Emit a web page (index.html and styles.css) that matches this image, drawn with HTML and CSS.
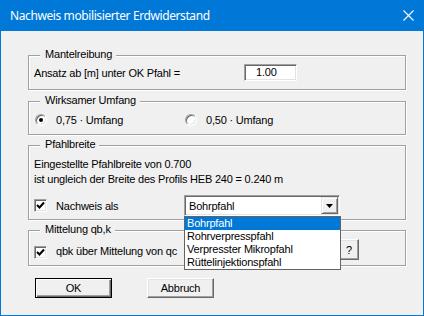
FILE: index.html
```html
<!DOCTYPE html>
<html lang="de">
<head>
    <meta charset="UTF-8">
    <title>Nachweis mobilisierter Erdwiderstand</title>
    <link rel="stylesheet" href="styles.css">
</head>
<body>
    <div class="window">
        <div class="titlebar">
            <span class="title">Nachweis mobilisierter Erdwiderstand</span>
            <svg class="close" width="11" height="11" viewBox="0 0 11 11">
                <path d="M0.5 0.5 L10.5 10.5 M10.5 0.5 L0.5 10.5" stroke="#fff" stroke-width="1.1" fill="none"/>
            </svg>
        </div>
        <div class="client">
            <div class="group g-mantel">
                <div class="legend">Mantelreibung</div>
                <div class="row r-mantel">
                    <span class="label-wide">Ansatz ab [m] unter OK Pfahl =</span>
                    <span class="edit">1.00</span>
                </div>
            </div>

            <div class="group g-umfang">
                <div class="legend">Wirksamer Umfang</div>
                <div class="row r-umfang">
                    <span class="radio checked"></span>
                    <span class="radio-label">0,75 · Umfang</span>
                    <span class="radio"></span>
                    <span class="radio-label">0,50 · Umfang</span>
                </div>
            </div>

            <div class="group g-breite">
                <div class="legend">Pfahlbreite</div>
                <div class="info">
                    <div>Eingestellte Pfahlbreite von 0.700</div>
                    <div>ist ungleich der Breite des Profils HEB 240 = 0.240 m</div>
                </div>
                <div class="row r-nachweis">
                    <span class="check checked">
                        <svg width="9" height="9" viewBox="0 0 9 9"><path d="M1 4 L3.5 6.5 L8 1.5" stroke="#000" stroke-width="2" fill="none"/></svg>
                    </span>
                    <span class="check-label">Nachweis als</span>
                    <div class="combo">
                        <span class="combo-value">Bohrpfahl</span>
                        <span class="combo-btn"><svg width="7" height="4" viewBox="0 0 7 4"><path d="M0 0 H7 L3.5 4 Z" fill="#000"/></svg></span>
                        <ul class="dropdown">
                            <li class="selected">Bohrpfahl</li>
                            <li>Rohrverpresspfahl</li>
                            <li>Verpresster Mikropfahl</li>
                            <li>Rüttelinjektionspfahl</li>
                        </ul>
                    </div>
                </div>
            </div>

            <div class="group g-mittel">
                <div class="legend">Mittelung qb,k</div>
                <div class="row r-mittel">
                    <span class="check checked">
                        <svg width="9" height="9" viewBox="0 0 9 9"><path d="M1 4 L3.5 6.5 L8 1.5" stroke="#000" stroke-width="2" fill="none"/></svg>
                    </span>
                    <span class="check-label">qbk über Mittelung von qc</span>
                    <button class="btn btn-help">?</button>
                </div>
            </div>

            <div class="buttons">
                <button class="btn btn-default">OK</button>
                <button class="btn btn-cancel">Abbruch</button>
            </div>
        </div>
    </div>
</body>
</html>
```

FILE: styles.css
```css
* {
    box-sizing: border-box;
}
body {
    margin: 0;
    font-family: "Liberation Sans", Arial, sans-serif;
    font-size: 11px;
    letter-spacing: -0.2px;
    color: #000;
}
.window {
    width: 424px;
    height: 316px;
    background-color: #f0f0f0;
    border: 1px solid #0078d7;
    border-top: 0;
    display: flex;
    flex-direction: column;
}
.titlebar {
    height: 31px;
    margin: 0 -1px;
    background-color: #0078d7;
    color: white;
    display: flex;
    align-items: center;
    justify-content: space-between;
    padding: 0 10px 0 10px;
    font-family: "Noto Sans", sans-serif;
    font-size: 12px;
    letter-spacing: -0.4px;
}
.client {
    padding: 24px 17px 0 27px;
}
.group {
    border: 1px solid #a0a0a0;
    box-shadow: inset 1px 1px 0 #fff, 1px 1px 0 #fff;
    padding: 0 5px;
}
.legend {
    width: fit-content;
    height: 13px;
    line-height: 13px;
    margin: -8px 0 0 6px;
    padding: 0 4px 0 5px;
    background-color: #f0f0f0;
}
.row {
    display: flex;
    align-items: center;
}
.g-mantel {
    height: 35px;
}
.r-mantel {
    margin-top: 3px;
    height: 17px;
}
.label-wide {
    width: 210px;
}
.edit {
    width: 53px;
    height: 17px;
    background-color: white;
    border: 1px solid;
    border-color: #a0a0a0 #fff #fff #a0a0a0;
    box-shadow: inset 1px 1px 0 #696969, inset -1px -1px 0 #e3e3e3;
    padding-left: 11px;
    line-height: 15px;
}
.g-umfang {
    height: 34px;
    margin-top: 11px;
}
.r-umfang {
    margin-top: 6px;
    height: 13px;
}
.radio {
    width: 12px;
    height: 12px;
    margin-left: 1px;
    border-radius: 50%;
    background-color: white;
    border: 1px solid;
    border-color: #a0a0a0 #fff #fff #a0a0a0;
    box-shadow: inset 1px 1px 0 #696969, inset -1px -1px 0 #e3e3e3;
    display: flex;
    align-items: center;
    justify-content: center;
}
.radio.checked::after {
    content: "";
    width: 4px;
    height: 4px;
    border-radius: 50%;
    background-color: #000;
}
.radio-label {
    margin-left: 9px;
    width: 128px;
}
.g-breite {
    height: 75px;
    margin-top: 10px;
}
.info {
    margin-top: 6px;
    line-height: 15px;
}
.r-nachweis {
    margin-top: 8px;
    height: 21px;
}
.check {
    width: 13px;
    height: 13px;
    flex-shrink: 0;
    background-color: white;
    border: 1px solid;
    border-color: #a0a0a0 #fff #fff #a0a0a0;
    box-shadow: inset 1px 1px 0 #696969, inset -1px -1px 0 #e3e3e3;
    display: flex;
    align-items: center;
    justify-content: center;
}
.check-label {
    margin-left: 9px;
    width: 128px;
    white-space: nowrap;
}
.combo {
    position: relative;
    width: 156px;
    height: 21px;
    background-color: white;
    border: 1px solid;
    border-color: #a0a0a0 #fff #fff #a0a0a0;
    box-shadow: inset 1px 1px 0 #696969, inset -1px -1px 0 #e3e3e3;
    display: flex;
    align-items: center;
    justify-content: space-between;
    padding: 1px 1px 1px 4px;
}
.combo-btn {
    width: 17px;
    height: 17px;
    background-color: #f0f0f0;
    border: 1px solid;
    border-color: #e3e3e3 #696969 #696969 #e3e3e3;
    box-shadow: inset 1px 1px 0 #fff, inset -1px -1px 0 #a0a0a0;
    display: flex;
    align-items: center;
    justify-content: center;
}
.dropdown {
    position: absolute;
    top: 20px;
    left: -1px;
    width: 157px;
    margin: 0;
    padding: 0;
    list-style: none;
    background-color: white;
    border: 1px solid #646464;
    z-index: 2;
}
.dropdown li {
    height: 13px;
    line-height: 13px;
    padding-left: 2px;
}
.dropdown li.selected {
    background-color: #0078d7;
    color: white;
}
.g-mittel {
    height: 36px;
    margin-top: 10px;
    padding-right: 46px;
}
.r-mittel {
    align-items: flex-start;
    margin-top: 3px;
}
.r-mittel .check {
    margin-top: 7px;
}
.r-mittel .check-label {
    margin-top: 6px;
    line-height: 13px;
}
.btn {
    font-family: "Liberation Sans", Arial, sans-serif;
    font-size: 11px;
    letter-spacing: -0.2px;
    color: #000;
    background-color: #f0f0f0;
    border: 1px solid;
    border-color: #fff #696969 #696969 #fff;
    box-shadow: inset -1px -1px 0 #a0a0a0, inset 1px 1px 0 #e3e3e3;
    padding: 0;
    height: 20px;
}
.btn-help {
    margin-left: auto;
    width: 20px;
    height: 21px;
}
.buttons {
    display: flex;
    margin-top: 12px;
    padding-left: 7px;
}
.btn-default {
    width: 77px;
    border: 1px solid #000;
    box-shadow: inset 1px 1px 0 #fff, inset -1px -1px 0 #696969, inset -2px -2px 0 #a0a0a0;
}
.btn-cancel {
    width: 67px;
    margin-left: 35px;
}
```
